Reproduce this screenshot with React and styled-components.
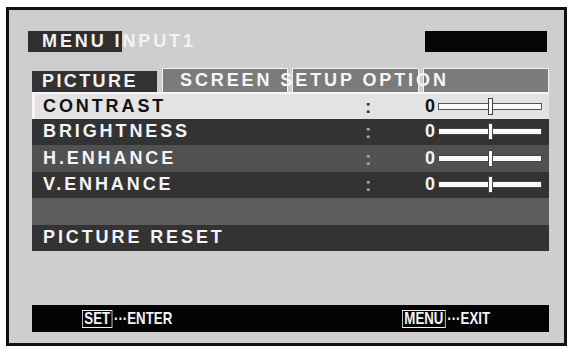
import React from 'react';
import styled, { createGlobalStyle } from 'styled-components';

const GlobalStyle = createGlobalStyle`
  html, body {
    margin: 0;
    padding: 0;
    background: #ffffff;
  }
  body {
    font-family: "Liberation Sans", Arial, sans-serif;
  }
`;

const Frame = styled.div`
  box-sizing: border-box;
  margin: 7px 0 0 6px;
  width: 561px;
  height: 339px;
  border: 3px solid #111;
  background: #cecece;
  padding: 21px 15px 0 23px;
  display: flex;
  flex-direction: column;
`;

const Header = styled.div`
  display: flex;
  justify-content: space-between;
  align-items: stretch;
  height: 21px;
  margin-left: -4px;
  margin-right: 2px;
`;

const Title = styled.div`
  display: flex;
  align-items: center;
  font-size: 18px;
  font-weight: bold;
  letter-spacing: 2.9px;
  color: #f2f2f2;
  white-space: pre;
`;

const TitleBox = styled.span`
  display: flex;
  align-items: center;
  height: 100%;
  background: #2f2f2f;
  padding-left: 14px;
  letter-spacing: 2.9px;
`;

const BlackBox = styled.div`
  width: 122px;
  background: #050505;
`;

const TabRow = styled.div`
  display: flex;
  align-items: flex-end;
  margin-top: 16px;
  height: 24px;
`;

const ActiveTab = styled.div`
  width: 125px;
  height: 21px;
  background: #333;
  color: #f4f4f4;
  font-size: 18px;
  font-weight: bold;
  letter-spacing: 2.4px;
  padding-left: 10px;
  box-sizing: border-box;
  display: flex;
  align-items: center;
`;

const TabGroup = styled.div`
  display: grid;
  grid-template-columns: 126px 127px 126px;
  column-gap: 4px;
  margin-left: 5px;
  height: 24px;
`;

const Tab = styled.div`
  grid-row: 1;
  grid-column: ${(p) => p.col};
  box-sizing: border-box;
  background: #7b7b7b;
  border: 1px solid #f2f2f2;
  border-bottom: none;
`;

const TabLabel = styled.div`
  grid-row: 1;
  grid-column: 1 / -1;
  display: flex;
  align-items: center;
  padding-left: 18px;
  color: #f6f6f6;
  font-size: 18px;
  font-weight: bold;
  letter-spacing: 2.9px;
  white-space: pre;
  z-index: 1;
`;

const List = styled.div`
  display: flex;
  flex-direction: column;
`;

const Row = styled.div`
  box-sizing: border-box;
  height: 26.5px;
  display: flex;
  align-items: center;
  padding: 0 7px 0 11px;
  background: ${(p) => p.bg};
  color: ${(p) => (p.selected ? '#111' : '#f4f4f4')};
  border-left: ${(p) => (p.selected ? '3px solid #f6f6f6' : 'none')};
  border-top: ${(p) => (p.selected ? '2px solid #f6f6f6' : 'none')};
  padding-left: ${(p) => (p.selected ? '8px' : '11px')};
`;

const Label = styled.div`
  flex: 1;
  font-size: 18px;
  font-weight: bold;
  letter-spacing: 2.9px;
  white-space: pre;
`;

const Colon = styled.div`
  width: 5px;
  font-size: 19px;
  font-weight: bold;
  line-height: 1;
  color: ${(p) => (p.selected ? '#333' : '#aaa')};
`;

const Value = styled.div`
  width: 10px;
  margin-left: 55px;
  font-size: 18px;
  font-weight: bold;
  letter-spacing: -0.5px;
`;

const Track = styled.div`
  position: relative;
  box-sizing: border-box;
  width: 104px;
  height: 7px;
  margin-left: 3px;
  background: #fafafa;
  border: 1px solid ${(p) => (p.selected ? '#555' : '#444')};
`;

const Thumb = styled.div`
  position: absolute;
  top: -6px;
  left: ${(p) => p.pos}%;
  box-sizing: border-box;
  width: 5px;
  height: 17px;
  margin-left: -2px;
  background: #fafafa;
  border: 1px solid #444;
`;

const Footer = styled.div`
  margin-top: auto;
  margin-bottom: 11px;
  height: 27px;
  background: #030303;
  display: grid;
  grid-template-columns: 320px auto;
  align-items: center;
  padding-left: 50px;
  color: #f4f4f4;
  font-size: 17px;
  font-weight: bold;
`;

const Hint = styled.div`
  display: flex;
  align-items: center;
  white-space: pre;
  transform: scaleX(0.78);
  transform-origin: left center;
`;

const Key = styled.span`
  border: 1px solid #f0f0f0;
  padding: 0 2px;
  margin-right: 2px;
  line-height: 16px;
`;

const rows = [
  { label: 'CONTRAST', bg: '#e3e3e3', selected: true, value: 0 },
  { label: 'BRIGHTNESS', bg: '#333333', value: 0 },
  { label: 'H.ENHANCE', bg: '#515151', value: 0 },
  { label: 'V.ENHANCE', bg: '#333333', value: 0 },
  { label: '', bg: '#5c5c5c' },
  { label: 'PICTURE RESET', bg: '#333333' },
];

export default function App() {
  return (
    <>
      <GlobalStyle />
      <Frame>
        <Header>
          <Title>
            <TitleBox>MENU I</TitleBox>NPUT1
          </Title>
          <BlackBox />
        </Header>
        <TabRow>
          <ActiveTab>PICTURE</ActiveTab>
          <TabGroup>
            <Tab col={1} />
            <Tab col={2} />
            <Tab col={3} />
            <TabLabel>SCREEN SETUP OPTION</TabLabel>
          </TabGroup>
        </TabRow>
        <List>
          {rows.map((r, i) => (
            <Row key={i} bg={r.bg} selected={r.selected}>
              <Label>{r.label}</Label>
              {r.value !== undefined && (
                <>
                  <Colon selected={r.selected}>:</Colon>
                  <Value>{r.value}</Value>
                  <Track selected={r.selected}>
                    <Thumb pos={50} />
                  </Track>
                </>
              )}
            </Row>
          ))}
        </List>
        <Footer>
          <Hint>
            <Key>SET</Key>
            <span>···ENTER</span>
          </Hint>
          <Hint>
            <Key>MENU</Key>
            <span>···EXIT</span>
          </Hint>
        </Footer>
      </Frame>
    </>
  );
}
